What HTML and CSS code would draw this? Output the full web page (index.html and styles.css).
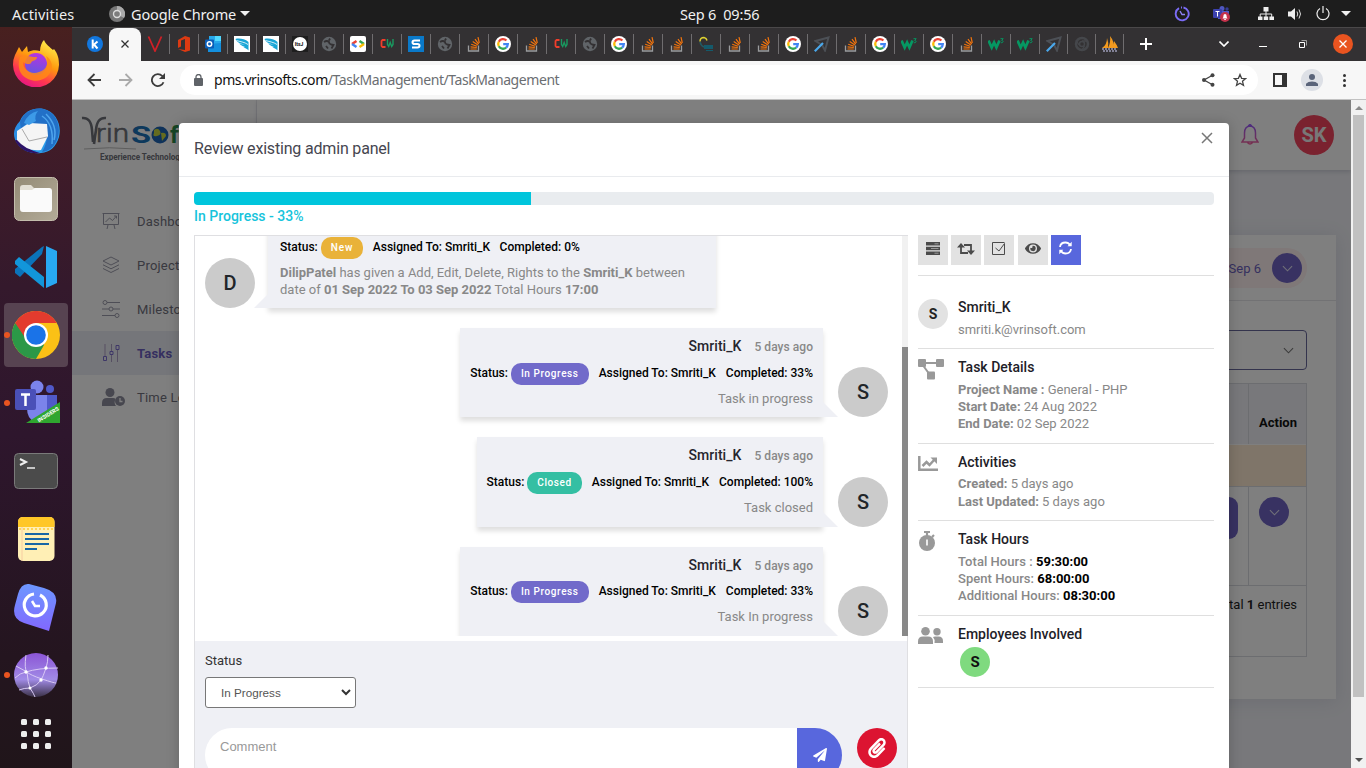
FILE: index.html
```html
<!DOCTYPE html>
<html lang="en">
<head>
<meta charset="utf-8">
<title>Task Management</title>
<link rel="stylesheet" href="styles.css">
</head>
<body>
<svg class="defs" width="0" height="0">
  <defs>
    <linearGradient id="ffg" x1="0.8" y1="0" x2="0.3" y2="1"><stop offset="0" stop-color="#fff44f"/><stop offset=".45" stop-color="#ff980e"/><stop offset=".75" stop-color="#ff3750"/><stop offset="1" stop-color="#e31587"/></linearGradient>
    <linearGradient id="ffp" x1="0.6" y1="0" x2="0.4" y2="1"><stop offset="0" stop-color="#b833e1"/><stop offset="1" stop-color="#6057e0"/></linearGradient>
    <linearGradient id="tb" x1="0" y1="0" x2="1" y2="1"><stop offset="0" stop-color="#2a84df"/><stop offset="1" stop-color="#2aa6f0"/></linearGradient>
    <linearGradient id="fl" x1="0" y1="0" x2="1" y2="1"><stop offset="0" stop-color="#948b76"/><stop offset="1" stop-color="#b3ab98"/></linearGradient>
    <linearGradient id="tm" x1="0" y1="0" x2="0" y2="1"><stop offset="0" stop-color="#6c97ff"/><stop offset="1" stop-color="#8268ff"/></linearGradient>
    <linearGradient id="gw" x1="0" y1="0" x2="0" y2="1"><stop offset="0" stop-color="#8b55d6"/><stop offset=".6" stop-color="#a18be6"/><stop offset="1" stop-color="#3b3248"/></linearGradient>
    <linearGradient id="bell" x1="0" y1="0" x2="0" y2="1"><stop offset="0" stop-color="#9a5cff"/><stop offset="1" stop-color="#f0609e"/></linearGradient>
    <symbol id="so" viewBox="0 0 16 16"><path d="M2.500 9.500V15h10V9.500" fill="none" stroke="#9a9c9e" stroke-width="1.300"/><path d="M4.500 13h6.300M4.600 10.800l6.200.7M5.200 8.300l5.900 1.900M6.700 5.600l5.200 3.500M9 3.200l3.700 5M12 1.200l1.300 5.800" stroke="#f2740d" stroke-width="1.200"/></symbol>
    <symbol id="gg" viewBox="0 0 16 16"><circle cx="8" cy="8" r="8" fill="#fff"/><g fill="none" stroke-width="2.300"><path d="M11.400 4.500A4.800 4.800 0 0 0 3.800 5.700" stroke="#ea4335"/><path d="M3.800 5.700a4.800 4.800 0 0 0 0 4.600" stroke="#fbbc05"/><path d="M3.800 10.300a4.800 4.800 0 0 0 7.300 1.300" stroke="#34a853"/><path d="M11.100 11.600A4.800 4.800 0 0 0 12.800 8.200H8.200" stroke="#4285f4"/></g></symbol>
    <symbol id="globe" viewBox="0 0 16 16"><circle cx="8" cy="8" r="7.200" fill="#606468"/><path d="M3 6q3-2 5 0 0 2 2 2.500l2.500.5-2 3.500M5 10l2 2.500M9 2.500l-1 2" fill="none" stroke="#333133" stroke-width="1.800"/></symbol>
    <symbol id="cw" viewBox="0 0 16 16"><path d="M6.500 4h-3L2.500 5v5l1 1h3" fill="none" stroke="#ef3e2c" stroke-width="1.800"/><path d="M8.500 3v5.500l1.200 2 1.500-4 1.500 4L14 8.500V3" fill="none" stroke="#199a60" stroke-width="1.400"/></symbol>
    <symbol id="wing" viewBox="0 0 16 16"><path d="M0 0h16v16H0z" fill="#fff"/><path d="M1.500 3c3-1 9-.5 13 3v8.500c-1-1.500-3-2-5-3.500 1 0 2 0 3 .5-3-1-5.500-2-7.500-4 1.500.5 4 1 6 1.200C6 7.500 3 6.500 1.500 3z" fill="#17a5d6"/><path d="M2.500 4.500c3 1 8 1.500 11.500 4" fill="none" stroke="#fff" stroke-width=".8"/></symbol>
    <symbol id="w3" viewBox="0 0 16 16"><path d="M.5 4.500l3.200 7 2.400-5 2.300 5 3.100-7" fill="none" stroke="#059862" stroke-width="2.700"/><path d="M12.500 2.700h2.700l-1.500 1.800c2 0 2 2.500-.9 2.200" fill="none" stroke="#059862"/></symbol>
    <symbol id="arrow" viewBox="0 0 16 16"><path d="M1.500 5L14.500 1.500 11 14.500 8 9z" fill="none" stroke="#4c5056" stroke-width="2"/><path d="M.8 15.200L9 7" stroke="#4aa8ec" stroke-width="2.200"/></symbol>
    <symbol id="dn" viewBox="0 0 12 7"><path d="M1 1l5 5 5-5" fill="none" stroke="currentColor" stroke-width="1.200"/></symbol>
  </defs>
</svg>
<div class="desktop">
  <header class="topbar">
    <span class="activities">Activities</span>
    <svg class="chromegray" viewBox="0 0 16 16"><circle cx="8" cy="8" r="8" fill="#777"/><path d="M8 0a8 8 0 0 1 7 12L8 8z" fill="#aaa"/><circle cx="8" cy="8" r="4.200" fill="#ddd"/><circle cx="8" cy="8" r="2.800" fill="#7d7d7d"/></svg>
    <span class="appname">Google Chrome</span><i class="tri"></i>
    <span class="clock">Sep 6&nbsp; 09:56</span>
    <div class="tray">
      <svg width="16" height="16" viewBox="0 0 16 16"><path d="M9.500 1.500A6.500 6.500 0 1 1 5 2.200M7 1.500h1" fill="none" stroke="#7b6cf6" stroke-width="1.900"/><path d="M6 5l2 3.500h3" fill="none" stroke="#8f84f6" stroke-width="1.400"/></svg>
      <svg class="t2" width="17" height="16" viewBox="0 0 17 16"><circle cx="9" cy="2.500" r="2.500" fill="#4f57c0"/><circle cx="14" cy="3" r="1.700" fill="#353c97"/><path d="M5 5h11v8H5z" fill="#5059c9"/><rect y="3" width="9" height="9" rx="1" fill="#3b41ad"/><path d="M2.500 5.500h4M4.500 5.500v5" stroke="#fff"/><circle cx="12" cy="11" r="5" fill="#c4314b"/><path d="M9.500 12.500q1-1 1-3a1.500 1.500 0 0 1 3 0q0 2 1 3zM11.300 13h1.500v1h-1.500z" fill="#fff"/></svg>
      <svg class="t3" width="16" height="14" viewBox="0 0 16 14"><path d="M5.500 0h5v4.500h-5zM0 9.500h4.500V13H0zM5.700 9.500h4.500V13H5.700zM11.400 9.500H16V13h-4.600z" fill="#eee"/><path d="M8 4v6M2.200 10V7h11.500v3" fill="none" stroke="#eee"/></svg>
      <svg class="t4" width="15" height="14" viewBox="0 0 15 14"><path d="M0 4.500h3L7 1v12L3 9.500H0z" fill="#eee"/><path d="M9 4.500q1.500 2.500 0 5M11 2.500q3 4.500 0 9" fill="none" stroke="#ddd"/></svg>
      <svg class="t5" width="14" height="15" viewBox="0 0 14 15"><path d="M4 2.500a6 6 0 1 0 6 0M7 0v7" fill="none" stroke="#eee" stroke-width="1.200"/></svg>
      <i class="tri"></i>
    </div>
  </header>
  <div class="below">
    <nav class="dock">
      <div class="app"><svg viewBox="0 0 48 48"><path d="M47 26A23 23 0 1 1 3 16l4-8 3 5 5-6 1 6c4-2 8-2 12-1 0-5 2-9 4-11 2 5 6 7 9 10l1-1c4 5 5 10 5 16z" fill="url(#ffg)"/><circle cx="24" cy="25" r="11" fill="url(#ffp)"/><path d="M8 18c6-3 9 0 17 0 0 4-5 3-6 6-1 2-6 1-8-1 0 8 8 13 16 10 8-2 10-10 7-16 6 4 7 10 5 15-4 9-14 12-23 8C7 36 5 27 8 18z" fill="#ff8a16" opacity=".85"/></svg></div>
      <div class="app"><svg viewBox="0 0 48 48"><path d="M8 14C12 4 22 0 32 2c12 3 18 16 15 28-3 10-9 15-18 16-10 1-19-2-24-10C1 30 0 22 8 14z" fill="url(#tb)"/><path d="M8 15C12 5 22 0 31 2c13 3 18 16 15 28-3 10-9 14-16 15 5-8 6-16 3-22-4-6-12-8-18-6-3 1-5 4-6 7z" fill="#2270c7"/><path d="M3 33c4 9 13 14 25 13-9-2-16-7-20-13z" fill="#2c1369"/><path d="M5 24L17 16l18 1 1 12-7 14q-14 2-24-10z" fill="#f5f5f5"/><path d="M10 22l7 12 18-4" fill="none" stroke="#aaa"/><path d="M12 16q4-10 14-12-4 5-2 10l-7 4z" fill="#3c9ae8"/><path d="M30 9q12 8 10 28M34 7q12 12 8 26" fill="none" stroke="#4fa5ed" stroke-width="1.500"/></svg></div>
      <div class="app"><svg viewBox="0 0 48 48"><rect x="2.500" y="2.500" width="43" height="43" rx="5" fill="url(#fl)" stroke="#c4bdac"/><path d="M8 13q0-3 3-3h8l3 3h14q3 0 3 3v10H8z" fill="#e4e0d6"/><path d="M8 15h12l3-2h14q3 0 3 3v18q0 3-3 3H11q-3 0-3-3z" fill="#fafafa"/></svg></div>
      <div class="app"><svg viewBox="0 0 48 48"><path d="M32 3l-2 8L8 34l-5-4v-4L30 4z" fill="#0b73ba"/><path d="M3 18l4-4 25 20v11L3 21z" fill="#1296da"/><path d="M34 3l11 5v32l-11 5z" fill="#28a9f3"/></svg></div>
      <div class="app current"><i class="run"></i><svg viewBox="0 0 48 48"><circle cx="24" cy="24" r="24" fill="#fbc116"/><path d="M24 24L3.200 12A24 24 0 0 0 24 48l8-14z" fill="#2b9847"/><path d="M3.200 12a24 24 0 0 1 41.600 0H24l-10 16z" fill="#e33b2e"/><circle cx="24" cy="24" r="12" fill="#fff"/><circle cx="24" cy="24" r="9.800" fill="#1a73e8"/></svg></div>
      <div class="app"><i class="run"></i><svg viewBox="0 0 48 48"><circle cx="25" cy="8" r="6.500" fill="#7b83eb"/><circle cx="38" cy="10" r="4" fill="#5059c9"/><path d="M34 16h11v16q-2 8-11 8z" fill="#5059c9"/><path d="M15 16h20v22q-4 6-12 5-8-3-8-14z" fill="#7b83eb"/><rect x="3" y="10" width="21" height="21" rx="2" fill="#4a50b8"/><path d="M9 15.500h9M13.500 15.500V27" stroke="#fff" stroke-width="2.500"/><path d="M14 44L48 23v21z" fill="#2fa62f"/><text class="ins" x="27" y="43.500" transform="rotate(-32 27 43.500)">INSIDERS</text></svg></div>
      <div class="app"><svg viewBox="0 0 48 48"><rect x="2.500" y="6.500" width="43" height="35" rx="4" fill="#4b4b4b" stroke="#7a7a7a"/><path d="M8 12l6 3-6 3" fill="none" stroke="#eee" stroke-width="2"/><path d="M15 21h8" stroke="#eee" stroke-width="1.500"/></svg></div>
      <div class="app"><svg viewBox="0 0 48 48"><rect x="6" y="2" width="36.500" height="44" rx="5" fill="#ffefb5"/><path d="M6 12V7q0-5 5-5h26.500q5 0 5 5v5z" fill="#ffc727"/><path d="M7 14h35" stroke="#ffd454" stroke-width="2" stroke-dasharray="2 2"/><path d="M10 12v34" stroke="#f7cda2"/><path d="M13 19h24M13 24h24M13 29h24M13 34h12" stroke="#1766a6" stroke-width="2"/></svg></div>
      <div class="app"><svg viewBox="0 0 48 48"><path d="M17 1l15 4q14 4 12 15L37 48 12 40Q-1 36 3 22L6 11Q9 0 17 1z" fill="url(#tm)"/><path d="M28 11a11 11 0 1 1-6-1" fill="none" stroke="#fff" stroke-width="3.200" transform="translate(0 1)"/><path d="M20 18l3 5h5" fill="none" stroke="#fff" stroke-width="2.500"/></svg></div>
      <div class="app"><i class="run"></i><svg viewBox="0 0 48 48"><circle cx="24" cy="24" r="22" fill="url(#gw)"/><path d="M14 4q-2 14 1 17t15 7 14 4M36 4q0 7-2 13-3 9-5 12M3 27q5-5 11-6 12-4 32-4M15 21q1 11 3 16 4 6 5 9M18 37q7-2 12-9M18 37q-6 0-11 2M4 15l11 6" fill="none" stroke="#d9c9f5"/><g fill="#fff"><circle cx="14" cy="21" r="1.700"/><circle cx="34" cy="17" r="1.700"/><circle cx="29" cy="29" r="1.700"/><circle cx="18" cy="37" r="1.500"/></g></svg></div>
      <div class="grid9"><i></i><i></i><i></i><i></i><i></i><i></i><i></i><i></i><i></i></div>
    </nav>
    <div class="browser">
      <div class="tabs">
        <span class="tab first"><svg viewBox="0 0 16 16"><circle cx="8" cy="8" r="8" fill="#1277de"/><path d="M5.700 3.500v9M10.500 5.500L7 8.500l3.500 4" fill="none" stroke="#fff" stroke-width="2"/></svg></span>
        <span class="tab active"><svg class="x" viewBox="0 0 8 8"><path d="M.5.5l7 7M7.500.5l-7 7" stroke="#333" stroke-width="1.300"/></svg></span>
        <span class="tab"><svg viewBox="0 0 16 16"><path d="M1.500.5L8 15 14.500.5" fill="none" stroke="#cf2027" stroke-width="1.800"/></svg></span>
        <span class="tab"><svg viewBox="0 0 16 16"><path d="M2 4l7-4 5 1.500v13L9 16l-7-3 7 1V3L5 4.500v6L2 12z" fill="#dc3a12"/></svg></span>
        <span class="tab"><svg viewBox="0 0 16 16"><path d="M4 0h12v10H4z" fill="#28a8ea"/><path d="M10 0h6v5h-6z" fill="#50d9ff"/><path d="M3 8l13-1v9H3z" fill="#1490df"/><rect y="3.500" width="9" height="9" rx="1" fill="#0a5eb8"/><circle cx="4.500" cy="8" r="2.200" fill="none" stroke="#fff" stroke-width="1.500"/></svg></span>
        <span class="tab"><svg><use href="#wing"/></svg></span>
        <span class="tab"><svg><use href="#wing"/></svg></span>
        <span class="tab"><svg viewBox="0 0 16 16"><path d="M0 0h16v16H0z" fill="#1e1e1e"/><circle cx="8" cy="8" r="7" fill="#fff"/><text class="its" x="2.800" y="9.800">ItsJ</text></svg></span>
        <span class="tab"><svg><use href="#globe"/></svg></span>
        <span class="tab"><svg viewBox="0 0 16 16"><rect width="16" height="16" rx="2" fill="#fff"/><path d="M6.500 5L2 8" stroke="#ea4335" stroke-width="2.500"/><path d="M2 8l4.500 3" stroke="#4285f4" stroke-width="2.500"/><path d="M9.500 5L14 8" stroke="#34a853" stroke-width="2.500"/><path d="M14 8l-4.500 3" stroke="#fbbc05" stroke-width="2.500"/></svg></span>
        <span class="tab"><svg><use href="#cw"/></svg></span>
        <span class="tab"><svg viewBox="0 0 16 16"><path d="M0 0h16v16H0z" fill="#0a79c9"/><path d="M12 4.500H6.500Q4.500 4.500 4.500 6.200 4.500 8 6.500 8h3q2 0 2 1.800 0 1.700-2 1.700H4" fill="none" stroke="#fff" stroke-width="2"/></svg></span>
        <span class="tab"><svg><use href="#globe"/></svg></span>
        <span class="tab"><svg><use href="#so"/></svg></span>
        <span class="tab"><svg><use href="#gg"/></svg></span>
        <span class="tab"><svg><use href="#so"/></svg></span>
        <span class="tab"><svg><use href="#cw"/></svg></span>
        <span class="tab"><svg><use href="#globe"/></svg></span>
        <span class="tab"><svg><use href="#gg"/></svg></span>
        <span class="tab"><svg><use href="#so"/></svg></span>
        <span class="tab"><svg><use href="#so"/></svg></span>
        <span class="tab"><svg viewBox="0 0 16 16"><path d="M2 5.500q0-4 4-4 2.500.5 3 3" fill="none" stroke="#e0d331" stroke-width="1.500"/><path d="M2 6q1 4 4 5" fill="none" stroke="#245a63" stroke-width="1.500"/><path d="M6 9h9v4H6zM8 14h7v1H8z" fill="#145a6b"/></svg></span>
        <span class="tab"><svg><use href="#so"/></svg></span>
        <span class="tab"><svg><use href="#so"/></svg></span>
        <span class="tab"><svg><use href="#gg"/></svg></span>
        <span class="tab"><svg><use href="#arrow"/></svg></span>
        <span class="tab"><svg><use href="#so"/></svg></span>
        <span class="tab"><svg><use href="#gg"/></svg></span>
        <span class="tab"><svg><use href="#w3"/></svg></span>
        <span class="tab"><svg><use href="#gg"/></svg></span>
        <span class="tab"><svg><use href="#so"/></svg></span>
        <span class="tab"><svg><use href="#w3"/></svg></span>
        <span class="tab"><svg><use href="#w3"/></svg></span>
        <span class="tab narrow"><svg><use href="#arrow"/></svg></span>
        <span class="tab narrow"><svg viewBox="0 0 16 16"><g fill="none" stroke="#45474b"><circle cx="8" cy="8" r="6" stroke-width="2.500"/><circle cx="8" cy="8" r="2.500" stroke-width="1.500"/><path d="M8 5h6M5 9L2 4M10.500 10L8 14" stroke-width="1.300"/></g></svg></span>
        <span class="tab narrow"><svg viewBox="0 0 16 16"><path d="M0 12q5-3 5-10 2 5 1 10zM6 12q3-6 2-12 5 6 3 12zM11 12l1-7q3 4 4 7z" fill="#f29a1f"/><path d="M0 13h15M1 15h14" stroke="#9c9cb8" stroke-width="1.700" stroke-dasharray="2 1"/></svg></span>
        <svg class="plus" width="12" height="12" viewBox="0 0 12 12"><path d="M6 0v12M0 6h12" stroke="#fff" stroke-width="2"/></svg>
        <div class="winctl">
          <svg width="10" height="6" viewBox="0 0 10 6"><path d="M.5.5L5 5 9.500.5" fill="none" stroke="#fff" stroke-width="1.600"/></svg>
          <svg width="8" height="8" viewBox="0 0 8 8"><path d="M0 6.500h8" stroke="#fff"/></svg>
          <svg width="8" height="8" viewBox="0 0 8 8"><path d="M.5 2.500h5v5h-5z" fill="none" stroke="#fff"/><path d="M2.500.5h5v5" fill="none" stroke="#bbb" stroke-width=".8"/></svg>
          <span class="close"><svg width="8" height="8" viewBox="0 0 8 8"><path d="M.5.5l7 7M7.500.5l-7 7" stroke="#fff" stroke-width="1.300"/></svg></span>
        </div>
      </div>
      <div class="toolbar">
        <svg width="14" height="14" viewBox="0 0 14 14"><path d="M14 7H1.500M7.500 1l-6 6 6 6" fill="none" stroke="#3c3c3c" stroke-width="1.800"/></svg>
        <svg class="fw" width="14" height="14" viewBox="0 0 14 14"><path d="M0 7h12.500M6.500 1l6 6-6 6" fill="none" stroke="#aaa" stroke-width="1.800"/></svg>
        <svg class="rl" width="14" height="14" viewBox="0 0 14 14"><path d="M12.500 9.200A6 6 0 1 1 11.300 3L13 5" fill="none" stroke="#3c3c3c" stroke-width="1.800"/><path d="M14 0v6H8z" fill="#3c3c3c"/></svg>
        <div class="omni">
          <svg width="9" height="12" viewBox="0 0 9 12"><rect y="4" width="9" height="8" rx="1" fill="#5f6368"/><path d="M2 5V3a2.500 2.500 0 0 1 5 0v2" fill="none" stroke="#5f6368" stroke-width="1.300"/></svg>
          <span class="url"><b>pms.vrinsofts.com</b>/TaskManagement/TaskManagement</span>
          <svg class="share" width="13" height="14" viewBox="0 0 13 14"><path d="M11 2L2 7l9 5" fill="none" stroke="#444" stroke-width="1.300"/><g fill="#444"><circle cx="10.500" cy="2.200" r="2"/><circle cx="2" cy="7" r="2"/><circle cx="10.500" cy="11.800" r="2"/></g></svg>
          <svg class="star" width="14" height="14" viewBox="0 0 14 14"><path d="M7 1.500l1.600 3.800 4.100.3-3.200 2.700 1 4L7 10.200l-3.500 2.100 1-4L1.300 5.600l4.100-.3z" fill="none" stroke="#444" stroke-width="1.300"/></svg>
        </div>
        <svg class="side" width="14" height="14" viewBox="0 0 14 14"><path d="M1 1h12v12H1z" fill="none" stroke="#333" stroke-width="2"/><path d="M9 1h4v12H9z" fill="#333"/></svg>
        <span class="prof"><svg width="12" height="12" viewBox="0 0 12 12"><circle cx="6" cy="3" r="3" fill="#5a647a"/><path d="M0 12V9.700Q2 7.500 6 7.500t6 2.200V12z" fill="#5a647a"/></svg></span>
        <span class="dots"><i></i><i></i><i></i></span>
      </div>
      <div class="viewport">
        <div class="page">
          <aside class="sidebar">
            <svg class="logo" width="174" height="46" viewBox="0 0 174 46"><path d="M1 3q9-1 10 12l1 12M25 3q-9-1-10 12-1 6-2 14" fill="none" stroke="#6e7078" stroke-width="2.600"/><text class="lg" x="15" y="27" textLength="33" lengthAdjust="spacingAndGlyphs">rin</text><text class="ls" x="50" y="28" textLength="20" lengthAdjust="spacingAndGlyphs">S</text><circle cx="79" cy="20" r="8.500" fill="#1e64b4"/><path d="M73 15q4-3 6 1t-3 5-3-3zM80 18q5-1 5 3l-4 5z" fill="#c9d63e"/><text class="lf" x="89" y="28">ft</text><path d="M3 34q25-2.500 52 0" fill="none" stroke="#bbb"/><text class="lt" x="19" y="44.500" textLength="84" lengthAdjust="spacingAndGlyphs">Experience Technology</text></svg>
            <a class="nav"><svg viewBox="0 0 18 18"><path d="M.5 1.500h17M1.500 1.500v11h15v-11M6 13l-1 4M12 13l1 4M3.500 10l4-4 3 2.500L14.500 4M12 4h2.500v2.500" fill="none" stroke="#9d9dac"/></svg>Dashboard</a>
            <a class="nav"><svg viewBox="0 0 18 18"><path d="M9 1l8 4-8 4-8-4zM1 8.800l8 4 8-4M1 12.500l8 4 8-4" fill="none" stroke="#9d9dac"/></svg>Projects</a>
            <a class="nav"><svg viewBox="0 0 18 18"><path d="M5 2.500h13M0 9h7M11 9h7M0 15.500h13" stroke="#9d9dac"/><g fill="none" stroke="#9d9dac"><circle cx="3" cy="2.500" r="2"/><circle cx="9" cy="9" r="2"/><circle cx="15" cy="15.500" r="2"/></g></svg>Milestones</a>
            <a class="nav on"><svg viewBox="0 0 18 18"><path d="M3 0v12M9.500 0v7M15.500 6v12M9.500 11v7" stroke="#ad9fc4"/><path d="M1.500 12.500h3v4h-3zM8 7.500h3v3H8zM14 1.500h3v4h-3z" fill="none" stroke="#7d6fd0"/></svg>Tasks</a>
            <a class="nav"><svg class="wide" viewBox="0 0 23 18"><circle cx="8" cy="4.500" r="4.500" fill="#8e8e9e"/><path d="M0 18v-3q0-5 5-5h6q2 0 2.500 1-2 4 .5 7z" fill="#8e8e9e"/><circle cx="18" cy="13" r="5" fill="#8e8e9e"/><path d="M18 10v3.500h2.500" fill="none" stroke="#fff" stroke-width="1.300"/></svg>Time Log</a>
          </aside>
          <div class="main">
            <div class="head">
              <svg class="bell" width="18" height="22" viewBox="0 0 18 22"><path d="M9 2Q3.500 2.500 3.500 9v5L1 18h16l-2.500-4V9Q14.500 2.500 9 2zM6.500 18.500q2.500 3 5 0M7 2l2-1.500L11 2" fill="none" stroke="url(#bell)" stroke-width="1.500"/></svg>
              <span class="sk">SK</span>
            </div>
            <section class="card">
              <div class="daterow"><div class="pill">Sep 6 <span class="go"><svg><use href="#dn"/></svg></span></div></div>
              <div class="cardbody">
                <div class="filter"><svg><use href="#dn"/></svg></div>
                <div class="table">
                  <div class="tr th"><span></span><span class="act">Action</span></div>
                  <div class="beige"></div>
                  <div class="tr td"><span class="bcell"><i class="btn"></i></span><span class="act"><span class="go"><svg><use href="#dn"/></svg></span></span></div>
                  <div class="total">Total <b>1</b> entries</div>
                </div>
              </div>
            </section>
          </div>
          <div class="backdrop"></div>
          <div class="modal">
            <div class="mhead"><span>Review existing admin panel</span><svg width="12" height="12" viewBox="0 0 12 12"><path d="M1 1l10 10M11 1L1 11" stroke="#777" stroke-width="1.500"/></svg></div>
            <div class="mbody">
              <div class="bar"><i></i></div>
              <div class="pct">In Progress - 33%</div>
              <div class="cols">
                <div class="chat">
                  <div class="scroll">
                    <div class="msgs">
                      <div class="msg left"><span class="av">D</span><div class="bub"><div class="st"><span>Status: <em class="new">New</em></span><span>Assigned To: Smriti_K</span><span>Completed: 0%</span></div><p><b>DilipPatel</b> has given a Add, Edit, Delete, Rights to the <b>Smriti_K</b> between date of <b>01 Sep 2022 To 03 Sep 2022</b> Total Hours <b>17:00</b></p></div></div>
                      <div class="msg"><div class="bub"><div class="who">Smriti_K<small>5 days ago</small></div><div class="st"><span>Status: <em>In Progress</em></span><span>Assigned To: Smriti_K</span><span>Completed: 33%</span></div><p>Task in progress</p></div><span class="av">S</span></div>
                      <div class="msg tall"><div class="bub"><div class="who">Smriti_K<small>5 days ago</small></div><div class="st"><span>Status: <em class="closed">Closed</em></span><span>Assigned To: Smriti_K</span><span>Completed: 100%</span></div><p>Task closed</p></div><span class="av">S</span></div>
                      <div class="msg last"><div class="bub"><div class="who">Smriti_K<small>5 days ago</small></div><div class="st"><span>Status: <em>In Progress</em></span><span>Assigned To: Smriti_K</span><span>Completed: 33%</span></div><p>Task In progress</p></div><span class="av">S</span></div>
                    </div>
                    <div class="track"><i></i></div>
                  </div>
                  <div class="form">
                    <label>Status</label>
                    <div class="select">In Progress<svg width="10" height="7" viewBox="0 0 10 7"><path d="M1 1l4 4 4-4" fill="none" stroke="#333" stroke-width="2"/></svg></div>
                    <div class="send">
                      <div class="cmt">Comment</div>
                      <div class="plane"><svg width="14" height="14" viewBox="0 0 512 512"><path fill="#fff" d="M476 3.200L12.500 270.600c-18.100 10.400-15.800 35.600 2.200 43.200L121 358.400l287.300-253.200c5.500-4.900 13.300 2.600 8.600 8.300L176 407v80.500c0 23.600 28.500 32.900 42.500 15.800L282 426l124.600 52.200c14.200 6 30.400-2.900 33-18.200l72-432C515 7.800 493.300-6.800 476 3.200z"/></svg></div>
                      <div class="clip"><svg width="18" height="20" viewBox="0 0 448 512"><path fill="#fff" d="M43.246 466.142c-58.430-60.289-57.341-157.511 1.386-217.581L254.392 34c44.316-45.332 116.351-45.336 160.671 0 43.890 44.894 43.943 117.329 0 162.276L232.214 383.128c-29.855 30.537-78.633 30.111-107.982-.998-28.275-29.970-27.368-77.473 1.452-106.953l143.743-146.835c6.182-6.314 16.312-6.422 22.626-.241l22.861 22.379c6.315 6.182 6.422 16.312.241 22.626L171.427 319.927c-4.932 5.045-5.236 13.428-.648 18.292 4.372 4.634 11.245 4.711 15.688.165l182.849-186.851c19.613-20.062 19.613-52.725-.011-72.798-19.189-19.627-49.957-19.637-69.154 0L90.390 293.295c-34.763 35.560-35.299 93.120-1.191 128.313 34.010 35.093 88.985 35.137 123.058.286l172.060-175.999c6.177-6.319 16.307-6.433 22.626-.256l22.877 22.364c6.319 6.177 6.434 16.307.256 22.626l-172.060 175.998c-59.576 60.938-155.943 60.216-214.770-.485z"/></svg></div>
                    </div>
                  </div>
                </div>
                <div class="info">
                  <div class="btns">
                    <span><svg width="14" height="13" viewBox="0 0 14 13"><path d="M0 0h14v3.500H0zM0 4.700h14v3.500H0zM0 9.500h14V13H0z" fill="#4b4b4b"/><path d="M8.500 1.800h4M8.500 11.200h4M5 6.500h7.500" stroke="#999"/></svg></span>
                    <span><svg width="18" height="12" viewBox="0 0 18 12"><path d="M4 3v7h7M7 2h7v7" fill="none" stroke="#4b4b4b" stroke-width="1.800"/><path d="M0 4.500L4 0l4 4.500zM10 7.500h8L14 12z" fill="#4b4b4b"/></svg></span>
                    <span><svg width="14" height="13" viewBox="0 0 14 13"><path d="M12.500 5v7.500H.5V.5h12M3.500 6l3.500 3 5.500-7.500V5" fill="none" stroke="#4b4b4b"/></svg></span>
                    <span><svg width="16" height="15" viewBox="0 0 576 512"><path fill="#4b4b4b" d="M572.520 241.400C518.290 135.590 410.930 64 288 64S57.680 135.640 3.480 241.410a32.350 32.350 0 0 0 0 29.190C57.710 376.410 165.070 448 288 448s230.320-71.640 284.520-177.410a32.350 32.350 0 0 0 0-29.190zM288 400a144 144 0 1 1 144-144 143.930 143.930 0 0 1-144 144zm0-240a95.310 95.310 0 0 0-25.310 3.790 47.850 47.850 0 0 1-66.900 66.900A95.780 95.780 0 1 0 288 160z"/></svg></span>
                    <span class="blue"><svg width="13" height="14" viewBox="0 0 13 14"><path d="M1 6Q1.500 1.500 6.500 1.500 9.500 1.500 11 4M12 8Q11.500 12.500 6.500 12.500 3.500 12.500 2 10" fill="none" stroke="#fff" stroke-width="1.800"/><path d="M12.700.8v4.500H8.500zM.3 13.200V8.700h4z" fill="#fff"/></svg></span>
                  </div>
                  <div class="blk user"><span class="ic"><b class="sav">S</b></span><div><h4>Smriti_K</h4><p>smriti.k@vrinsoft.com</p></div></div>
                  <div class="blk b95"><span class="ic"><svg width="26" height="21" viewBox="0 0 26 21"><path d="M4 4h17M4 5l8 11" stroke="#999" stroke-width="2"/><g fill="#999"><rect width="8" height="8" rx="1"/><rect x="18" width="8" height="8" rx="1"/><rect x="9" y="12.500" width="8" height="8" rx="1"/></g></svg></span><div><h4>Task Details</h4><p><b>Project Name :</b> General - PHP<br><b>Start Date:</b> 24 Aug 2022<br><b>End Date:</b> 02 Sep 2022</p></div></div>
                  <div class="blk b77"><span class="ic"><svg width="20" height="15" viewBox="0 0 20 15"><path d="M1.300 0v13.700H20M4.500 10l4-4 3 3L17 3" fill="none" stroke="#999" stroke-width="2.500"/><path d="M12.500 1.500H19V8z" fill="#999"/></svg></span><div><h4>Activities</h4><p><b>Created:</b> 5 days ago<br><b>Last Updated:</b> 5 days ago</p></div></div>
                  <div class="blk b95"><span class="ic"><svg width="18" height="20" viewBox="0 0 18 20"><circle cx="9" cy="12" r="8" fill="#999"/><path d="M6 1h6M9 1v4M14 6l2-2" stroke="#999" stroke-width="2.200"/><path d="M9 8.500v6" stroke="#fff" stroke-width="1.600"/></svg></span><div><h4>Task Hours</h4><p class="hrs"><b>Total Hours :</b> <strong>59:30:00</strong><br><b>Spent Hours:</b> <strong>68:00:00</strong><br><b>Additional Hours:</b> <strong>08:30:00</strong></p></div></div>
                  <div class="blk b72"><span class="ic"><svg width="25" height="17" viewBox="0 0 25 17"><g fill="#999"><circle cx="7.500" cy="4.300" r="4.300"/><path d="M0 17v-2.500q0-5 5-5h5q5 0 5 5V17z"/><circle cx="19" cy="4.800" r="3.700"/><path d="M16.500 16h8.500v-2q0-4.500-4.500-4.500H17q-1 0-2 .5 2 2 1.500 6z"/></g></svg></span><div><h4>Employees Involved</h4><span class="emp">S</span></div></div>
                </div>
              </div>
            </div>
          </div>
        </div>
        <div class="vscroll"><i class="up"></i><i class="thumb"></i><i class="down"></i></div>
      </div>
    </div>
  </div>
</div>
</body>
</html>
```
FILE: styles.css
```css
* { box-sizing: border-box; }
body { margin: 0; font-family: Roboto, "Liberation Sans", sans-serif; }
i, em { font-style: normal; }
svg { display: block; flex: none; }
.defs { position: absolute; }
.desktop { width: 1366px; height: 768px; overflow: hidden; display: flex; flex-direction: column; }
.topbar { position: relative; height: 27px; flex: none; background: #1d1d1d; color: #f0f0f0; font: 14.500px/26px "Noto Sans", sans-serif; display: flex; align-items: center; padding-left: 12px; }
.activities { width: 97px; letter-spacing: .2px; }
.chromegray { width: 16px; height: 16px; }
.appname { margin-left: 6px; width: 105px; white-space: nowrap; letter-spacing: -.15px; }
.tri { border: 5px solid transparent; border-top-color: #f0f0f0; border-bottom: 0; margin-left: 4px; }
.clock { position: absolute; left: 680px; white-space: nowrap; letter-spacing: -.2px; }
.tray { margin-left: auto; display: flex; align-items: center; padding-right: 15px; }
.tray .t2 { margin-left: 23px; }
.tray .t3 { margin-left: 28px; }
.tray .t4 { margin-left: 14px; }
.tray .t5 { margin-left: 13px; }
.tray .tri { margin-left: 11px; }
.below { flex: 1; display: flex; min-height: 0; }
.dock { width: 72px; flex: none; background: linear-gradient(#48201f, #411c28 15%, #34192c 35%, #2e162d 55%, #24151f 85%, #20151a); display: flex; flex-direction: column; align-items: center; padding-top: 4px; gap: 4px; }
.app { position: relative; width: 64px; height: 64px; flex: none; display: flex; align-items: center; justify-content: center; border-radius: 4px; }
.app svg { width: 48px; height: 48px; }
.app.current { background: #574351; }
.run { position: absolute; left: 0; top: 29px; width: 6px; height: 6px; border-radius: 50%; background: #e95420; }
.ins { font: bold 5.500px Roboto, sans-serif; fill: #fff; }
.grid9 { display: grid; grid-template-columns: repeat(3, 6px); gap: 6px; margin-top: 8px; }
.grid9 i { height: 6px; border-radius: 1.500px; background: #eee; }
.browser { flex: 1; min-width: 0; display: flex; flex-direction: column; }
.tabs { height: 34px; flex: none; background: #333133; border-top: 1px solid #4a4849; display: flex; align-items: center; padding-bottom: 1px; }
.tab { width: 29px; height: 20px; flex: none; display: flex; align-items: center; justify-content: center; border-right: 1px solid #6f6d6f; }
.tab svg { width: 16px; height: 16px; }
.tab.narrow { width: 28px; }
.tab.first { width: 37px; border: 0; padding-left: 9px; }
.tab.active { width: 32px; height: 34px; margin-bottom: -1px; padding-bottom: 1px; background: #f7f7f7; border: 0; border-radius: 8px 8px 0 0; }
.tab svg.x { width: 8px; height: 8px; }
.its { font: bold 5px Roboto, sans-serif; }
.plus { margin-left: 16px; }
.winctl { margin-left: auto; display: flex; align-items: center; padding-right: 13px; }
.winctl > svg:nth-child(2) { margin-left: 30px; }
.winctl > svg:nth-child(3) { margin-left: 32px; }
.close { width: 20px; height: 20px; margin-left: 26px; border-radius: 50%; background: #e95420; display: flex; align-items: center; justify-content: center; }
.toolbar { height: 39px; flex: none; background: #f7f7f7; border-bottom: 1px solid #c2c2c2; display: flex; align-items: center; padding-left: 15px; }
.fw { margin-left: 18px; }
.rl { margin-left: 18px; }
.omni { margin-left: 15px; width: 1078px; height: 30px; border-radius: 15px; background: #fff; display: flex; align-items: center; padding: 0 11px 0 14px; }
.url { margin-left: 11px; font: 14px "Noto Sans", sans-serif; letter-spacing: -.43px; color: #6b6e72; white-space: nowrap; padding-bottom: 2px; }
.url b { font-weight: 400; color: #111; }
.share { margin-left: auto; }
.star { margin-left: 18px; }
.side { margin-left: 15px; }
.prof { width: 22px; height: 22px; margin-left: 14px; border-radius: 50%; background: #dde0e6; display: flex; align-items: center; justify-content: center; }
.dots { margin-left: 20px; display: flex; flex-direction: column; gap: 2px; }
.dots i { width: 3px; height: 3px; border-radius: 50%; background: #333; }
.viewport { flex: 1; min-height: 0; display: flex; }
.page { position: relative; width: 1279px; flex: none; overflow: hidden; display: flex; background: #f0f1f6; }
.sidebar { width: 185px; flex: none; background: #fff; border-right: 1px solid #ececf0; padding-top: 15px; }
.logo { margin: 0 0 38px 9px; }
.lg { font: 300 25px Roboto, sans-serif; fill: #6e7078; stroke: #6e7078; stroke-width: .6; }
.ls { font: bold 24px Roboto, sans-serif; fill: #1a72b8; }
.lf { font: bold 24px Roboto, sans-serif; fill: #2a8c4a; }
.lt { font: bold 9px Roboto, sans-serif; fill: #6e7078; }
.nav { height: 44px; display: flex; align-items: center; padding-left: 30px; gap: 17px; font-size: 13px; letter-spacing: .2px; color: #72727f; }
.nav svg { width: 18px; height: 18px; }
.nav svg.wide { width: 23px; margin-right: -5px; }
.nav.on { background: #ebecf4; font-weight: 700; color: #6c5fc0; }
.main { flex: 1; min-width: 0; }
.head { height: 70px; background: #fff; box-shadow: 0 2px 4px rgba(80, 80, 110, .2); display: flex; align-items: center; justify-content: flex-end; padding-right: 17px; gap: 35px; }
.sk { width: 40px; height: 40px; border-radius: 50%; background: #f5455f; color: #f1f1f1; font-weight: 700; font-size: 20px; display: flex; align-items: center; justify-content: center; }
.card { margin: 65px 15px 0 21px; height: 464px; background: #fff; box-shadow: 0 2px 18px rgba(80, 80, 120, .14); }
.daterow { height: 66px; border-bottom: 1px solid #e4e4e8; display: flex; justify-content: flex-end; padding: 13px 29px 0; }
.pill { height: 40px; width: 220px; border-radius: 20px; background: #fff0f0; display: flex; align-items: center; justify-content: flex-end; padding-right: 5px; gap: 11px; font-size: 13px; color: #6c62c0; }
.go { width: 30px; height: 30px; border-radius: 50%; background: #7064c4; color: #e0e0f0; display: flex; align-items: center; justify-content: center; }
.go svg, .filter svg { width: 11px; height: 7px; }
.cardbody { padding: 29px 29px 0; }
.filter { height: 40px; border: 1px solid #68689a; border-radius: 4px; color: #777; display: flex; align-items: center; justify-content: flex-end; padding-right: 12px; margin-bottom: 13px; }
.table { border: 1px solid #d9dae0; height: 274px; }
.tr { display: flex; justify-content: flex-end; }
.tr > span:first-child { flex: 1; }
.act { width: 58px; border-left: 1px solid #d9dae0; display: flex; padding-left: 10px; }
.th { height: 60px; background: #f0f1f6; font-size: 13px; font-weight: 700; color: #111; }
.th .act { padding-top: 31px; }
.beige { margin-top: 1px; height: 41px; background: #ffebd2; }
.td { height: 100px; border: solid #d9dae0; border-width: 1px 0; }
.td .act { padding-top: 10px; }
.bcell { display: flex; justify-content: flex-end; padding: 10px 10px 0 0; }
.btn { width: 90px; height: 42px; border-radius: 9px; background: #7064c4; }
.total { text-align: right; padding: 11px 9px; font-size: 13px; color: #222; }
.backdrop { position: absolute; inset: 0; background: rgba(0, 0, 0, .5); }
.modal { position: absolute; left: 107px; top: 23px; width: 1050px; height: 660px; background: #fff; border-radius: 4px; box-shadow: 0 0 14px rgba(0, 0, 0, .2); }
.mhead { height: 54px; border-bottom: 1px solid #e9ebee; display: flex; justify-content: space-between; padding: 9px 16px 0 15px; font-size: 16px; letter-spacing: -.18px; line-height: 33px; color: #464650; }
.mbody { padding: 15px 15px 0; }
.bar { height: 13px; border-radius: 4px; background: #e9ecef; overflow: hidden; }
.bar i { display: block; width: 33%; height: 13px; background: #00c5dc; }
.pct { font-size: 14px; font-weight: 500; line-height: 22px; height: 30px; color: #17c4dc; }
.cols { display: flex; gap: 10px; }
.chat { width: 714px; flex: none; border: 1px solid #dfdfe2; }
.scroll { height: 400px; overflow: hidden; display: flex; justify-content: space-between; margin-right: -1px; }
.msgs { width: 703px; display: flex; flex-direction: column; justify-content: flex-end; gap: 20px; padding: 0 10px; }
.msg { height: 89px; flex: none; display: flex; align-items: flex-end; justify-content: flex-end; gap: 15px; }
.msg.tall { height: 90px; }
.msg.left { justify-content: flex-start; height: 100px; gap: 13px; }
.av { width: 50px; height: 50px; border-radius: 50%; background: #cbcbcb; color: #212529; font-size: 20px; font-weight: 500; display: flex; align-items: center; justify-content: center; }
.bub { position: relative; height: 100%; background: #eff0f5; padding: 9px 10px 0; text-align: right; box-shadow: 0 4px 5px rgba(0, 0, 0, .13); }
.bub::after { content: ""; position: absolute; right: -15px; bottom: 0; border-left: 15px solid #eff0f5; border-top: 15px solid transparent; }
.left .bub { width: 448px; padding: 28px 12px 0; text-align: left; }
.left .bub::after { right: auto; left: -14px; border-left: 0; border-right: 15px solid #eff0f5; }
.who { font-size: 14px; line-height: 18px; font-weight: 500; color: #26262e; letter-spacing: .05px; }
.who small { font-size: 12px; color: #888; margin-left: 13px; }
.st { display: flex; justify-content: flex-end; gap: 10px; height: 22px; line-height: 22px; margin-top: 6px; font-size: 12px; font-weight: 500; color: #000; }
.last .st { margin-top: 5px; }
.left .st { justify-content: flex-start; margin-top: 0; gap: 9.500px; }
.st em { display: inline-block; vertical-align: top; height: 22px; margin-top: 1px; padding: 0 10px; border-radius: 10px; background: #716aca; color: #fff; font-size: 10px; letter-spacing: .6px; }
.st em.new { background: #e9b239; letter-spacing: .9px; }
.st em.closed { background: #34bfa3; }
.bub p { margin: 6px 0 0; font-size: 13px; line-height: 17px; color: #888; }
.track { width: 6px; background: #f1f1f1; padding-top: 111px; }
.track i { display: block; height: 289px; background: #888; }
.form { margin-top: 5px; height: 180px; background: #eff0f5; padding: 10px; }
.form label { display: block; font-size: 13px; line-height: 20px; height: 26px; color: #333; }
.select { width: 151px; height: 31px; border: 1px solid #777; border-radius: 3px; background: #fff; display: flex; align-items: center; justify-content: space-between; padding: 0 4px 0 15px; font: 11.700px "Liberation Sans", sans-serif; color: #555; }
.send { display: flex; margin-top: 20px; }
.cmt { width: 592px; height: 54px; border-radius: 27px 0 0 27px; background: #fff; padding: 11px 15px; font: 13px "Liberation Sans", sans-serif; color: #999; }
.plane { width: 45px; height: 54px; border-radius: 0 27px 27px 0; background: #5867dd; display: flex; align-items: center; justify-content: center; }
.clip { width: 40px; height: 40px; margin-left: 15px; border-radius: 50%; background: #dc1431; display: flex; align-items: center; justify-content: center; }
.info { flex: 1; }
.btns { display: flex; gap: 3.200px; height: 41px; border-bottom: 1px solid #dfdfdf; }
.btns span { width: 30px; height: 30px; background: #e2e2e2; display: flex; justify-content: center; align-items: center; padding-bottom: 3px; }
.btns .blue { background: #5867dd; padding-bottom: 5px; }
.blk { display: flex; border-bottom: 1px solid #dfdfdf; padding-top: 9px; }
.ic { width: 40px; flex: none; }
.blk h4 { margin: 0; font-size: 14px; font-weight: 500; line-height: 18px; color: #1e2128; }
.blk p { margin: 5px 0 0; font-size: 13px; line-height: 17px; color: #888; }
.user { height: 73px; padding-top: 22px; }
.sav { display: flex; align-items: center; justify-content: center; width: 30px; height: 30px; border-radius: 50%; background: #e2e2e2; font-size: 14px; color: #222; margin-top: 1px; }
.b95 { height: 95px; }
.b77 { height: 77px; }
.b77 p { line-height: 18px; margin-top: 4px; }
.b72 { height: 72px; }
.blk strong { color: #000; }
.hrs b { font-weight: 500; letter-spacing: .05px; }
.b95 .ic, .b77 .ic { padding-top: 1px; }
.b77 .ic { padding-top: 3px; }
.b72 .ic { padding-top: 2px; }
.emp { display: flex; align-items: center; justify-content: center; width: 30px; height: 30px; border-radius: 50%; background: #7fda7f; margin: 4px 0 0 2px; font-size: 15px; font-weight: 700; color: #111; }
.vscroll { flex: 1; background: #f1f1f1; display: flex; flex-direction: column; align-items: center; justify-content: space-between; padding: 6px 0; }
.vscroll .up { border: 4px solid transparent; border-bottom-color: #8a8a8a; border-top: 0; }
.vscroll .thumb { width: 11px; height: 582px; margin: 5px 0 auto; background: #c1c1c1; }
.vscroll .down { border: 4px solid transparent; border-top-color: #505050; border-bottom: 0; }
```
